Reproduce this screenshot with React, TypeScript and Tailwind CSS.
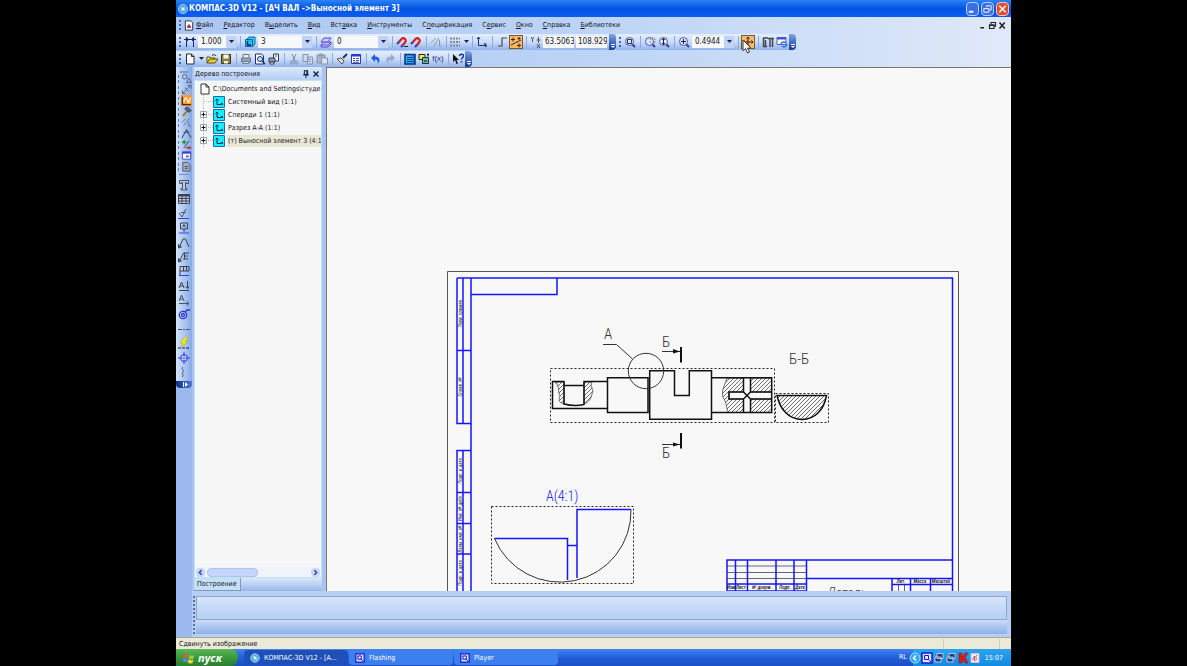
import type { ReactNode } from "react"
import clsx from "clsx"

const menu = [
  ["", "Ф", "айл"],
  ["", "Р", "едактор"],
  ["В", "ы", "делить"],
  ["", "В", "ид"],
  ["Вст", "а", "вка"],
  ["", "И", "нструменты"],
  ["С", "п", "ецификация"],
  ["С", "е", "рвис"],
  ["", "О", "кно"],
  ["", "С", "правка"],
  ["", "Б", "иблиотеки"],
]

const tree = [
  { label: "Системный вид (1:1)", expandable: false },
  { label: "Спереди 1 (1:1)", expandable: true },
  { label: "Разрез А-А (1:1)", expandable: true },
  { label: "(т) Выносной элемент 3 (4:1", expandable: true, selected: true },
]

function Icon({ children, className }: { children: ReactNode; className?: string }) {
  return (
    <svg
      viewBox="0 0 12 12"
      className={clsx("shrink-0", className ?? "h-3 w-3")}
      fill="none"
      stroke="#1f2a5a"
      aria-hidden="true"
    >
      {children}
    </svg>
  )
}

const lens = (
  <>
    <path d="M8 8l3 3" stroke="#3a3a9c" strokeWidth="2" />
    <circle cx="5.5" cy="5.5" r="4" fill="#dfe6fb" stroke="#4a55b8" />
  </>
)

const magnet = (
  <>
    <path d="M2.500 6.500L5.500 3a2.300 2.300 0 0 1 3.500 3.500L6.500 9.500" stroke="#d81e1e" strokeWidth="2.200" />
    <path d="M1 8l1.700-1.800M5 11l1.700-1.800" stroke="#2242c8" strokeWidth="2.200" />
  </>
)

const icons: Record<string, ReactNode> = {
  step: (
    <g stroke="#1e2478">
      <path d="M2.500 1v10M9.500 1v10M0 3.500h12" />
      <path d="M4 2L2.500 3.500 4 5M8 2l1.500 1.500L8 5" />
    </g>
  ),
  state: (
    <>
      <path d="M3 3l2-2h6v7l-2 2H3z" fill="#2fd0e8" stroke="#1b5fae" />
      <path d="M1.500 3.500h7v7h-7z" fill="#19c8e6" stroke="#1b5fae" />
      <path d="M3.500 5v4H7" stroke="#08215c" strokeWidth="1.300" />
    </>
  ),
  layers: (
    <g fill="#cfc8ff" stroke="#5548d0">
      <path d="M1 9l3-3h7L8 9zv2h7l3-3V6" />
      <path d="M1 6l3-4h7L8 6z" />
    </g>
  ),
  magnetOff: (
    <>
      {magnet}
      <path d="M8 10.500h4" stroke="#222" />
    </>
  ),
  magnet,
  round: (
    <g stroke="#8c94a8">
      <path d="M1 7l5-5M4 10l5-8M9.500 4v6h2" />
    </g>
  ),
  grid: <path d="M1 2.500h10M1 6h10M1 9.500h10" stroke="#85888f" strokeWidth="2" strokeDasharray="2 1" />,
  axes: (
    <g stroke="#2b3050">
      <path d="M2.500 1v8.500H10" />
      <path d="M1 3l1.500-2L4 3M9 8l2 1.500L9 11" />
      <path d="M8 7h2v2H8z" fill="#4a50d0" stroke="none" />
    </g>
  ),
  ortho: <path d="M2 10h4V2h5" stroke="#4a4d60" strokeWidth="1.200" />,
  params: (
    <g stroke="#3a2c14">
      <path d="M1 9l10-5" />
      <path d="M1 3.500h4M3 1.500v4M7 9.500h4M9 7.500v4M7.500 2.500h3M9 1v3" />
    </g>
  ),
  xy: (
    <g stroke="#4d5264">
      <path d="M1 1l1.500 2L4 1M2.500 3v3M8.500 1v6M6.500 4h4M7 8l3 4M10 8l-3 4" />
    </g>
  ),
  zoomFrame: (
    <>
      {lens}
      <path d="M3.500 3.500h4v4h-4z" stroke="#333" />
    </>
  ),
  zoomArea: (
    <>
      {lens}
      <path d="M6 2h5v5H6z" stroke="#777" strokeDasharray="1 1" />
    </>
  ),
  zoomScale: (
    <>
      {lens}
      <path d="M5.500 2.500v6M4 4l1.500-1.500L7 4M4 7l1.500 1.500L7 7" stroke="#222" />
    </>
  ),
  zoomIn: (
    <>
      {lens}
      <path d="M5.500 3v5M3 5.500h5" stroke="#222" />
    </>
  ),
  pan: (
    <g stroke="#2a1a05">
      <path d="M6 1v10M1 6h10" />
      <path d="M4.500 2.500L6 1l1.500 1.500M4.500 9.500L6 11l1.500-1.500M2.500 4.500L1 6l1.500 1.500M9.500 4.500L11 6 9.500 7.500" />
    </g>
  ),
  pages: (
    <g stroke="#44464d">
      <path d="M1 2h5M1.500 2v9M3.500 4v6M1 10.500h4" strokeWidth="1.500" />
      <path d="M6 2.500h6M8 2v9M10.500 2v9" strokeWidth="1.500" />
    </g>
  ),
  refresh: (
    <>
      <path d="M1 1.500h9v7H1z" fill="#fff" stroke="#5060c0" />
      <path d="M1 2.500h9" stroke="#4450c8" strokeWidth="2" />
      <path d="M5 8a3 3 0 0 1 5-1M11 8a3 3 0 0 1-5 2" stroke="#2a6fe8" strokeWidth="1.500" />
    </>
  ),
  fileNew: <path d="M2.500 1h5l2.500 2.500V11h-7.500zM7.500 1v2.500H10" fill="#fff" stroke="#2c2c34" />,
  open: (
    <>
      <path d="M1 10V4h3l1 1h4v2" fill="#f8e468" stroke="#5d5414" />
      <path d="M1 10l2.500-4H12L9 10z" fill="#e8cf30" stroke="#5d5414" />
      <path d="M6 2.500c2-1.500 3-1 4 .5" stroke="#222" />
    </>
  ),
  save: (
    <>
      <path d="M1.500 1.500h9v9h-9z" fill="#8d8148" stroke="#3a3416" />
      <path d="M3.500 1.500h5v4h-5zM4 8h4v2.500H4z" fill="#f5f3e6" stroke="none" />
    </>
  ),
  print: (
    <g stroke="#70788c">
      <path d="M3 5V1.500h6V5" fill="#e8ecf4" />
      <path d="M1.500 5h9v4h-9z" fill="#98a0b4" />
      <path d="M3 8.500h6v2H3z" fill="#dfe4ef" />
    </g>
  ),
  preview: (
    <>
      <path d="M1.500 1h6l2 2v8h-8z" fill="#fff" stroke="#222c6c" />
      <circle cx="6" cy="6" r="2.500" fill="#bde3f5" stroke="#20307c" />
      <path d="M8 8l3 3" stroke="#20307c" strokeWidth="1.500" />
    </>
  ),
  send: (
    <g stroke="#333a55">
      <path d="M5.500 1h5v7h-5z" fill="#fff" />
      <path d="M1 5h6v4H1z" fill="#8f98b4" />
      <path d="M2 9h4v2H2zM7 3h2" fill="#fff" />
    </g>
  ),
  cut: (
    <g stroke="#7f889e">
      <path d="M4 1l3 7M8 1L5 8" />
      <circle cx="3.800" cy="9.500" r="1.500" />
      <circle cx="8.200" cy="9.500" r="1.500" />
    </g>
  ),
  copy: (
    <g stroke="#8a93a8" fill="#cfd9ee">
      <path d="M1 1.500h5v7H1zM5.500 4h5v7h-5z" />
      <path d="M7 6.500h2M7 8.500h2" />
    </g>
  ),
  paste: (
    <g stroke="#8a93a8" fill="#aab5cc">
      <path d="M1 2h8v8H1zM3.500 1h3v2h-3z" />
      <path d="M5.500 5h6v6h-6z" fill="#dbe4f4" />
    </g>
  ),
  brush: (
    <>
      <path d="M7 5l4-4" stroke="#27306e" strokeWidth="2" />
      <path d="M1 6l4-1 3 3-2 3z" fill="#e9e4a8" stroke="#48507c" />
    </>
  ),
  props: (
    <>
      <path d="M1.500 1.500h9v9h-9z" fill="#fff" stroke="#3038b4" />
      <path d="M1.500 2.500h9" stroke="#2a36d8" strokeWidth="2" />
      <path d="M3 5.500h2M6 5.500h3M3 7.500h2M6 7.500h3M3 9.300h6" stroke="#4450a0" />
    </>
  ),
  undo: <path d="M1 5l4-4v2.500c5 0 6 4 2.500 7.500C8.500 8 7.500 6.500 5 6.500V9z" fill="#1e5ce8" stroke="none" />,
  redo: <path d="M11 5L7 1v2.500c-5 0-6 4-2.500 7.500C3.500 8 4.500 6.500 7 6.500V9z" fill="#97a8c8" stroke="none" />,
  library: (
    <>
      <path d="M1 1.500h10v9.500H1z" fill="#24b4e8" stroke="#0f2a84" strokeWidth="1.500" />
      <path d="M3 4.500h6M3 6.500h6M3 8.500h6M10 1v10" stroke="#0b3a98" />
    </>
  ),
  variables: (
    <>
      <path d="M1 1.500h6v5H1z" fill="#f6e75a" stroke="#222" />
      <path d="M4.500 4.500h6v6h-6z" fill="#6bbfa8" stroke="#20302c" />
      <path d="M6 8h3M9 1.500h2M10 .5v3" stroke="#111" />
    </>
  ),
  help: (
    <>
      <path d="M1 1v8l2-2 1.500 4L6 10.500 4.500 7H7z" fill="#111" stroke="none" />
      <path d="M7.500 3c0-2.500 4-2.500 4 0 0 1.500-2 1.500-2 3.500M9.500 8v1.500" stroke="#1c2ea8" strokeWidth="1.500" />
    </>
  ),
  geometry: (
    <g stroke="#5a6178">
      <circle cx="4" cy="4" r="2.500" />
      <path d="M6 10.500l2.500-5 3 5z" />
    </g>
  ),
  dims: <path d="M2 10l8-8M1.500 7v3.500H5M7.500 1.500H11V5M4 4l4 4" stroke="#555c72" />,
  marks: (
    <>
      <path d="M1.500 2v8.500H11" stroke="#5a2408" strokeWidth="1.500" />
      <path d="M3 8c1-6 3-6 4-2s2 2 3-3" stroke="#fff2c0" strokeWidth="1.500" />
    </>
  ),
  hammer: (
    <>
      <path d="M2 11l5-6" stroke="#b9721c" strokeWidth="2" />
      <path d="M4 3l3-2 4 4-2 2z" fill="#5a6178" stroke="#3c4256" />
    </>
  ),
  param: <path d="M1 6l4-4M3 9l6-7M8.500 5v5h2" stroke="#6a7188" />,
  measure: <path d="M1 11l5-9 5 9M3 5l6-1" stroke="#4c5268" strokeWidth="1.200" />,
  select: (
    <>
      <path d="M1 3.500h5M3.500 1v5" stroke="#1a9a28" strokeWidth="1.500" />
      <path d="M6 9.500h5" stroke="#d81e1e" strokeWidth="2" />
      <path d="M3 10l6-8" stroke="#3c4256" />
    </>
  ),
  view: (
    <>
      <path d="M1.500 2h9v8h-9z" fill="#fff" stroke="#3c48c0" />
      <path d="M1.500 3h9" stroke="#3444d8" strokeWidth="2" />
      <path d="M5.500 6h3v2h-3z" fill="#4a58c8" stroke="none" />
    </>
  ),
  spec: <path d="M2 1.500h5l3 3V11H2zM4 6h4M4 8h4" fill="#a8aebe" stroke="#4c5264" />,
  text: (
    <g stroke="#4a5064">
      <path d="M1.500 1.500h9v3h-2v-1h-1v6h1.500v1.500H3V9.500h1.500v-6h-1v1h-2z" fill="#c2cade" />
    </g>
  ),
  table: (
    <g stroke="#3e4252">
      <path d="M.5 1.500h11v9H.5z" fill="#c9cfdf" />
      <path d="M.5 2.500h11" strokeWidth="2" />
      <path d="M.5 5.500h11M.5 8h11M4 2v9M8 2v9" />
    </g>
  ),
  rough: (
    <>
      <path d="M1 5l3 4 4-8M3 4.500h4.500" stroke="#4a4f60" />
      <path d="M0 10.500h11" stroke="#3a3af0" />
    </>
  ),
  base: (
    <>
      <path d="M2.500 1h7v6h-7zM6 7v3M4.500 5.500L6 2.500l1.500 3" stroke="#3c4150" />
      <path d="M1 11h10" stroke="#3a3af0" />
    </>
  ),
  leader: <path d="M1.500 10L5 2h2.500L11 10M.5 7.500V11l3-1z" stroke="#3c4150" />,
  posLeader: <path d="M1.500 10l4-8H11M6 5h4M5 8h5M6.500 2v6M.5 7.500V11l3-1z" stroke="#3c4150" />,
  tolerance: (
    <>
      <path d="M2 10V1.500h9V6H2M5.500 2v4M8.500 2v4" stroke="#3c4150" />
      <path d="M1 10.500h10" stroke="#3a3af0" />
    </>
  ),
  cutLine: <path d="M1 8l2.500-6L6 8M2 6h3M9.500 1v7M8 6.500l1.500 2 1.500-2M1 10.500h10" stroke="#3c4150" />,
  arrowView: <path d="M1 7l2.500-6L6 7M2 5h3M1 9.500h9M8.500 7.500l2.500 2-2.500 2" stroke="#4c5264" />,
  detail: (
    <g stroke="#3434d0" strokeWidth="1.300">
      <circle cx="5" cy="7" r="3.700" />
      <circle cx="5" cy="7" r="1.500" />
      <path d="M7 4l2-2h3" />
    </g>
  ),
  axis: <path d="M0 6.500h4M5 6.500h2M8 6.500h4" stroke="#4c5264" />,
  auto: (
    <>
      <path d="M7 0L2 6h3l-2 4 7-5.500H7L10 0z" fill="#f6ee18" stroke="#a89a10" strokeWidth=".5" />
      <path d="M0 11h11" stroke="#222" strokeDasharray="3 1" />
    </>
  ),
  center: (
    <g stroke="#3c3ce0">
      <circle cx="6" cy="6" r="3.500" />
      <path d="M6 0v4M6 8v4M0 6h4M8 6h4M5 6h2" />
    </g>
  ),
  wave: <path d="M5 1c-3 2 2 3 0 5s2 3-1 5" stroke="#4c5264" />,
}

function Tool({ name, label, active }: { name: string; label: string; active?: boolean }) {
  return (
    <button
      aria-label={label}
      className={clsx(
        "flex h-[14px] w-[14px] shrink-0 items-center justify-center",
        active && "border border-[#6e5a3c] bg-[#ffb866]",
      )}
    >
      <Icon>{icons[name]}</Icon>
    </button>
  )
}

function Sep() {
  return (
    <span className="flex h-3 w-[6px] shrink-0 justify-center">
      <span className="w-px bg-[#8eabdc]" />
    </span>
  )
}

function Grip() {
  return (
    <span className="flex w-[7px] shrink-0 justify-center">
      <span className="h-[10px] border-l-2 border-dotted border-[#4667a8]" />
    </span>
  )
}

function Cap() {
  return (
    <span className="flex w-[7px] shrink-0 items-end justify-center self-stretch rounded-r-sm bg-gradient-to-b from-[#7fa5e6] to-[#123a94] pb-px">
      <svg viewBox="0 0 6 5" className="h-[5px] w-[6px]" aria-hidden="true">
        <path d="M1 0h4v1H1zM1 2h4L3 4z" fill="#fff" />
      </svg>
    </span>
  )
}

function Bar({ children }: { children: ReactNode }) {
  return (
    <div className="flex h-4 items-center rounded-r-sm bg-gradient-to-b from-[#e3eefe] via-[#c9dcf9] to-[#90b2ea]">
      {children}
    </div>
  )
}

function Combo({ value, label, className }: { value: string; label: string; className: string }) {
  return (
    <span className={clsx("mx-px grid h-3 shrink-0 items-center bg-[#f7f8fa]", className)}>
      <select
        aria-label={label}
        className="col-start-1 row-start-1 h-3 w-full appearance-none pl-[3px] text-[8px] leading-3 outline-none"
      >
        <option>{value}</option>
      </select>
      <span className="pointer-events-none col-start-1 row-start-1 flex h-3 w-[10px] items-center justify-center justify-self-end bg-[#bed3f5]">
        <Arrow />
      </span>
    </span>
  )
}

function Arrow() {
  return (
    <svg viewBox="0 0 5 3" className="h-[3px] w-[5px] shrink-0" aria-hidden="true">
      <path d="M0 0h5L2.500 3z" fill="#1b2440" />
    </svg>
  )
}

function Coord({ value, label }: { value: string; label: string }) {
  return (
    <input
      aria-label={label}
      defaultValue={value}
      className="mr-[2px] h-3 w-[31px] shrink-0 bg-[#f7f8fa] pl-[2px] text-[8px] leading-3 outline-none"
    />
  )
}

function TitleBar() {
  return (
    <header className="flex h-[17px] shrink-0 items-center bg-gradient-to-b from-[#2c83f6] via-[#0453e0] to-[#0b5cf4] px-[2px] text-white">
      <Icon className="mr-px h-[10px] w-[10px]">
        <circle cx="6" cy="6" r="5.500" fill="#4aa0e0" stroke="#b7e0ff" />
        <path d="M3 6h6M6 3v6M4 4l4 4M8 4l-4 4" stroke="#e8f8ff" />
      </Icon>
      <h1 className="flex-1 truncate font-['DejaVu_Sans_Condensed','DejaVu_Sans',sans-serif] text-[8px] leading-4 font-bold">
        КОМПАС-3D V12 - [АЧ ВАЛ -&gt;Выносной элемент 3]
      </h1>
      <div className="flex gap-[2px]">
        <button aria-label="Свернуть" className="h-[14px] w-[13px] rounded-sm border border-[#b9cdf7] bg-[#3b6fe6]">
          <Icon className="h-3 w-[11px]">
            <path d="M2 9h5" stroke="#fff" strokeWidth="2" />
          </Icon>
        </button>
        <button aria-label="Восстановить" className="h-[14px] w-[13px] rounded-sm border border-[#b9cdf7] bg-[#3b6fe6]">
          <Icon className="h-3 w-[11px]">
            <path d="M5 4V2.500h5V7H8M2 5.500h5.500v4H2z" stroke="#fff" />
          </Icon>
        </button>
        <button aria-label="Закрыть" className="h-[14px] w-[13px] rounded-sm border border-[#f3c3b4] bg-[#de5130]">
          <Icon className="h-3 w-[11px]">
            <path d="M2.500 2.500l7 7M9.500 2.500l-7 7" stroke="#fff" strokeWidth="1.500" />
          </Icon>
        </button>
      </div>
    </header>
  )
}

function MenuBar() {
  return (
    <nav className="flex h-4 items-center pr-1">
      <Grip />
      <Icon className="mr-px h-[11px] w-3">
        <path d="M2 1h6l2 2v8H2z" fill="#fff" stroke="#222c5c" />
        <path d="M4 8l2-3 2 3z" fill="#d04848" stroke="#8a2020" />
      </Icon>
      <div className="flex flex-1 gap-[10px]">
        {menu.map(([before, key, after]) => (
          <button key={before + key + after} className="leading-3">
            {before}
            <u>{key}</u>
            {after}
          </button>
        ))}
      </div>
      <div className="flex gap-px">
        <button aria-label="Свернуть документ">
          <Icon className="h-[9px] w-[9px]">
            <path d="M3 9h5" strokeWidth="2" stroke="#222" />
          </Icon>
        </button>
        <button aria-label="Восстановить документ">
          <Icon className="h-[9px] w-[9px]">
            <path d="M4 4V2h6v5H8M2 5h6v5H2zM2 6h6" strokeWidth="1.500" stroke="#222" />
          </Icon>
        </button>
        <button aria-label="Закрыть документ">
          <Icon className="h-[9px] w-[9px]">
            <path d="M2 2l7 8M9 2l-7 8" strokeWidth="2" stroke="#222" />
          </Icon>
        </button>
      </div>
    </nav>
  )
}

function Toolbars() {
  return (
    <>
      <div className="flex h-[17px] items-center">
        <Bar>
          <Grip />
          <Tool name="step" label="Текущий шаг курсора" />
          <Combo value="1.000" label="Шаг курсора" className="w-[38px]" />
          <Sep />
          <Tool name="state" label="Состояния видов" />
          <Combo value="3" label="Текущий вид" className="w-[54px]" />
          <Sep />
          <Tool name="layers" label="Состояния слоев" />
          <Combo value="0" label="Текущий слой" className="w-[54px]" />
          <Sep />
          <Tool name="magnetOff" label="Запретить привязки" />
          <Tool name="magnet" label="Привязки" />
          <Sep />
          <Tool name="round" label="Округление" />
          <Sep />
          <button aria-label="Сетка" className="flex w-5 items-center gap-[3px]">
            <Icon>{icons.grid}</Icon>
            <Arrow />
          </button>
          <Sep />
          <Tool name="axes" label="Локальная СК" />
          <Sep />
          <Tool name="ortho" label="Ортогональное черчение" />
          <Tool name="params" label="Параметрический режим" active />
          <Sep />
          <Tool name="xy" label="Координаты" />
          <Coord value="63.5063" label="Координата X" />
          <Coord value="108.929" label="Координата Y" />
          <Cap />
        </Bar>
        <Bar>
          <Grip />
          <Tool name="zoomFrame" label="Показать все" />
          <Sep />
          <Tool name="zoomArea" label="Увеличить рамкой" />
          <Tool name="zoomScale" label="Приблизить" />
          <Sep />
          <Tool name="zoomIn" label="Масштаб" />
          <Combo value="0.4944" label="Текущий масштаб" className="w-[42px]" />
          <Sep />
          <span className="relative">
            <Tool name="pan" label="Сдвинуть изображение" active />
            <svg viewBox="0 0 10 15" className="absolute top-1 left-px z-10 h-[15px] w-[10px]" aria-hidden="true">
              <path d="M1 1v11l2.500-2.500L5.500 14l2-1-2-4H9z" fill="#fff" stroke="#3c3c44" />
            </svg>
          </span>
          <Sep />
          <Tool name="pages" label="Листы" />
          <Tool name="refresh" label="Обновить" />
          <Cap />
        </Bar>
      </div>
      <div className="flex h-[17px] items-center">
        <Bar>
          <Grip />
          <button aria-label="Создать" className="flex w-[22px] items-center gap-[3px] pl-px">
            <Icon>{icons.fileNew}</Icon>
            <Arrow />
          </button>
          <Tool name="open" label="Открыть" />
          <Tool name="save" label="Сохранить" />
          <Sep />
          <Tool name="print" label="Печать" />
          <Tool name="preview" label="Предварительный просмотр" />
          <Tool name="send" label="Отправить" />
          <Sep />
          <Tool name="cut" label="Вырезать" />
          <Tool name="copy" label="Копировать" />
          <Tool name="paste" label="Вставить" />
          <Sep />
          <Tool name="brush" label="Копировать свойства" />
          <Tool name="props" label="Свойства" />
          <Sep />
          <Tool name="undo" label="Отменить" />
          <Tool name="redo" label="Повторить" />
          <Sep />
          <Tool name="library" label="Менеджер библиотек" />
          <Tool name="variables" label="Менеджер документа" />
          <button className="w-[14px] text-center font-['Liberation_Sans',sans-serif] text-[8px] leading-3 text-[#252a8c]">
            f(x)
          </button>
          <Sep />
          <Tool name="help" label="Справка" />
          <Cap />
        </Bar>
      </div>
    </>
  )
}

const compact = ["geometry", "dims", "marks", "hammer", "param", "measure", "select", "view", "spec"]
const markup = [
  "text",
  "table",
  "rough",
  "base",
  "leader",
  "posLeader",
  "tolerance",
  "cutLine",
  "arrowView",
  "detail",
  "axis",
  "auto",
  "center",
  "wave",
]

function SideTools() {
  return (
    <aside className="flex w-4 shrink-0 flex-col bg-[#9bb9ee]">
      <div className="flex flex-col rounded-b-sm bg-gradient-to-r from-[#d5e4fc] to-[#86aae6]">
        <div className="mx-1 mt-1 h-[2px] border-t-2 border-dotted border-[#6d8cc8]" />
        <div className="flex flex-col">
          {compact.map((name) => (
            <button key={name} aria-label={name} className="flex h-[11px] items-center gap-[2px] pl-[2px]">
              <span className="h-2 border-l border-dashed border-[#5f7cb6]" />
              <Icon className={clsx("h-[11px] w-[11px]", name === "marks" && "bg-[#f79a3c]")}>{icons[name]}</Icon>
            </button>
          ))}
        </div>
        <div className="mx-[3px] mt-[2px] h-px bg-[#6d8cc8]" />
        <div className="mt-1 flex h-[199px] flex-col justify-between">
          {markup.map((name) => (
            <button key={name} aria-label={name} className="flex justify-center">
              <Icon>{icons[name]}</Icon>
            </button>
          ))}
        </div>
        <div className="mt-[3px] flex h-[7px] items-center justify-end rounded-b-sm bg-gradient-to-r from-[#0b2f8c] to-[#4d7ad0] pr-1">
          <svg viewBox="0 0 5 5" className="h-[5px] w-[5px]" aria-hidden="true">
            <path d="M0 0h1v5H0zM2 0l3 2.500L2 5z" fill="#fff" />
          </svg>
        </div>
      </div>
    </aside>
  )
}

function TreePanel() {
  return (
    <section className="flex w-[134px] shrink-0 flex-col bg-[#a9c4f1] pr-1 pl-[2px]">
      <div className="flex h-[13px] shrink-0 items-center bg-gradient-to-b from-[#dce9fd] to-[#b4cdf5] pr-px pl-px">
        <h2 className="flex-1 leading-3">Дерево построения</h2>
        <button aria-label="Закрепить">
          <Icon className="h-[10px] w-[10px]">
            <path d="M4 2h4v5H4zM2.500 7h7M6 7v4M7 2v5" stroke="#10183c" strokeWidth="1.200" />
          </Icon>
        </button>
        <button aria-label="Закрыть панель">
          <Icon className="h-[10px] w-[10px]">
            <path d="M3 3l6 6M9 3l-6 6" stroke="#10183c" strokeWidth="1.500" />
          </Icon>
        </button>
      </div>
      <div className="flex min-h-0 flex-1 flex-col border border-[#bfe4f4] bg-[#f7f7f7]">
        <ul className="flex-1 overflow-hidden pt-[2px]">
          <li className="flex h-3 items-center whitespace-nowrap">
            <Icon className="mr-[2px] ml-1 h-3 w-3">
              <path d="M2 1h5l3 3v7H2zM7 1v3h3" fill="#fff" stroke="#333" />
            </Icon>
            C:\Documents and Settings\студе
          </li>
          {tree.map((item) => (
            <li key={item.label} className="flex h-[13px] items-center whitespace-nowrap">
              <svg viewBox="0 0 16 13" className="ml-[2px] h-[13px] w-4 shrink-0" aria-hidden="true">
                <path d="M6.500 0v13M7 6.500h9" stroke="#bbb" strokeDasharray="1 1" />
                {item.expandable && (
                  <>
                    <path d="M3.500 3.500h6v6h-6z" fill="#fff" stroke="#9aa6b4" />
                    <path d="M4.500 6.500h4M6.500 4.500v4" stroke="#111" />
                  </>
                )}
              </svg>
              <Icon className="mr-[2px] h-3 w-3">
                <path d="M.5.5h11v11H.5z" fill="#12f0fa" stroke="#1a6cb4" />
                <path d="M4 3v5.500h4.500M2.500 4.500L4 3l1.500 1.500M8 7.500h1.500V9" stroke="#04245c" />
              </Icon>
              <span className={clsx("flex-1 pl-px leading-3", item.selected && "bg-[#e9e7d4]")}>{item.label}</span>
            </li>
          ))}
        </ul>
        <div className="flex h-[10px] shrink-0 items-center gap-[2px] bg-[#f1f3fa] px-px">
          <button aria-label="Влево" className="h-[9px] w-[9px] rounded-sm bg-[#c6d6fb]">
            <Icon className="h-[9px] w-[9px]">
              <path d="M7.500 3l-3 3 3 3" stroke="#33487c" strokeWidth="2" />
            </Icon>
          </button>
          <span className="h-[9px] w-[51px] rounded-sm border border-[#aec3f2] bg-[#c6d6fb]" />
          <span className="flex-1" />
          <button aria-label="Вправо" className="h-[9px] w-[9px] rounded-sm bg-[#c6d6fb]">
            <Icon className="h-[9px] w-[9px]">
              <path d="M4.500 3l3 3-3 3" stroke="#33487c" strokeWidth="2" />
            </Icon>
          </button>
        </div>
      </div>
      <div className="flex h-[13px] shrink-0 bg-gradient-to-b from-[#dbe7fb] to-[#9ab8ec]">
        <button className="border-r border-b border-[#8097bd] bg-[#c3e0f6] px-[3px] leading-3">Построение</button>
      </div>
    </section>
  )
}

const stampLabels = [
  { y: 313, text: "Перв. примен." },
  { y: 387, text: "Справ. №" },
  { y: 471, text: "Подп. и дата" },
  { y: 508, text: "Инв. № дубл." },
  { y: 539, text: "Взам. инв. №" },
  { y: 573, text: "Подп. и дата" },
]

const titleLabels = [
  { x: 731, y: 589, text: "Изм" },
  { x: 741, y: 589, text: "Лист" },
  { x: 762, y: 589, text: "№ докум." },
  { x: 785, y: 589, text: "Подп." },
  { x: 800, y: 589, text: "Дата" },
  { x: 901, y: 583, text: "Лит." },
  { x: 920, y: 583, text: "Масса" },
  { x: 941, y: 583, text: "Масштаб" },
]

function Drawing() {
  return (
    <svg
      viewBox="327 68 684 523"
      preserveAspectRatio="xMinYMin slice"
      className="h-full w-full font-['Roboto_Condensed','Open_Sans_Condensed','Roboto',sans-serif]"
      fill="none"
      role="img"
      aria-label="Чертеж вала"
    >
      <defs>
        <pattern id="hatch" width="4" height="4" patternUnits="userSpaceOnUse">
          <path d="M-1 5L5-1M-1 1L1-1M3 5l2-2" stroke="#333" strokeWidth=".7" />
        </pattern>
      </defs>

      {/* sheet */}
      <path d="M447.500 600V271.500h511V600" stroke="#555" />
      <g stroke="#1414ff" strokeWidth="1.500">
        <path d="M471 600V278M457 278h495.500V600M471 294.500h86V278" />
        <path d="M457 278v145.500h14M463 278v145M457 350.500h14" />
        <path d="M457 600V450.500h14M463 450v150M457 492.500h14M457 523.500h14M457 554h14" />
      </g>
      <g fill="#111" fontSize="5" fontStyle="italic" textAnchor="middle">
        {stampLabels.map((l) => (
          <text key={l.y} transform={`translate(462 ${l.y}) rotate(-90)`}>
            {l.text}
          </text>
        ))}
      </g>

      {/* title block */}
      <path d="M727 566h79M727 572.500h79M727 578.500h79M898.500 584v8M904.500 584v8" stroke="#667" />
      <g stroke="#1414ff" strokeWidth="1.500">
        <path d="M952 560H727v31h79.500V560M735.500 560v31M747.500 560v31M776 560v31M794 560v31M727 584h79" />
        <path d="M806 578.500h146M892 578v14M910.500 578v14M930.500 578v14M892 584.500h60" />
      </g>
      <g fill="#111" fontSize="5" fontStyle="italic" fontWeight="500" textAnchor="middle">
        {titleLabels.map((l) => (
          <text key={l.text} x={l.x} y={l.y}>
            {l.text}
          </text>
        ))}
      </g>
      <g fill="#444" fontStyle="italic" fontWeight="300">
        <text x="827" y="598" fontSize="14">
          Деталь
        </text>
        <text x="914" y="596" fontSize="7">
          0.93
        </text>
        <text x="938" y="596" fontSize="7">
          1:1
        </text>
      </g>

      {/* view frames */}
      <g stroke="#222" strokeDasharray="2 2">
        <path d="M550.500 368.500h224v54h-224zM775.500 393.500h53v29h-53z" />
        <path d="M491.500 506.500h142v77h-142z" />
      </g>

      {/* shaft */}
      <g fill="url(#hatch)" stroke="#333" strokeWidth=".7">
        <path d="M555 382h9v22c-4-1-6-3-4-8-3-5 1-8-5-14z" />
        <path d="M584 382h8c-3 5 3 7 0 12-1 5-3 8-8 10z" />
        <path d="M727 378h16.500v14H729v7h14.500v13.500H728c-2-6-1-9-5-15-2-7 2-13 4-19.500z" />
        <path d="M750.500 378h21v14h-21zM750.500 399h21v13.500h-21z" />
      </g>
      <g stroke="#111" strokeWidth="1.500">
        <path d="M607.500 381.500H584v23c-6 1.500-14 1-20-.5v-22.500h-11.500v27h55M564 385.500h20" />
        <path d="M607.500 377.700H648v34.800h-40.500zM649.700 370.700h24.800v24.800h14.800v-24.800h22.200v48.600h-61.800z" />
        <path d="M711.500 377.700h60.200v34.800h-60.200M743.500 378v14H729v7h14.500v13.500M750.500 378v14h21M750.500 412.500V399h21M743.500 392l7 7M750.500 392l-7 7" />
      </g>
      <path d="M777 395.500c3 14 12 24 25 24s22-10 24.500-24z" fill="url(#hatch)" stroke="#111" strokeWidth="1.500" />

      {/* callouts */}
      <g stroke="#333">
        <circle cx="646" cy="371" r="17.700" />
        <path d="M603 344.500h13.500l16 14.500M662 351.500h18M662 444.500h18" />
      </g>
      <path d="M673 349l7 2.500-7 2zM673 442.500l7 2-7 2z" fill="#111" />
      <path d="M681 347v15.500M681 433v15.500" stroke="#111" strokeWidth="2" />
      <g fill="#333" fontSize="15" fontWeight="300">
        <text x="604" y="339">
          А
        </text>
        <text x="662" y="347">
          Б
        </text>
        <text x="662" y="458">
          Б
        </text>
        <text x="789" y="364">
          Б-Б
        </text>
      </g>

      {/* detail view */}
      <path d="M494.500 538.500A71 71 0 0 0 631 509.500" stroke="#333" />
      <path d="M494.500 538.500h73V580M577 578v-68.500h54M567.500 545.500h9.500" stroke="#1414ff" strokeWidth="1.500" />
      <text x="546" y="501" fontSize="14" fontWeight="300" fill="#2020f0">
        А(4:1)
      </text>
    </svg>
  )
}

function Task({ label, active }: { label: string; active?: boolean }) {
  return (
    <button
      className={clsx(
        "flex h-[15px] w-[104px] items-center gap-1 rounded-sm pl-[6px] leading-3",
        active ? "bg-[#1e50b8]" : "bg-[#3c80f0]",
      )}
    >
      {active ? (
        <Icon className="h-[10px] w-[10px]">
          <circle cx="6" cy="6" r="5" fill="#4aa8e0" stroke="#bfe6ff" />
          <path d="M3.500 6h5M6 3.500v5M4 4l4 4" stroke="#fff" />
        </Icon>
      ) : (
        <Icon className="h-[10px] w-[10px]">
          <path d="M1 1h10v10H1z" fill="#dfe4ff" stroke="#1818c0" strokeWidth="1.500" />
          <path d="M3.500 3.500h4v4h-4zM7 7l3 3" stroke="#1818c0" strokeWidth="1.200" />
        </Icon>
      )}
      {label}
    </button>
  )
}

function Taskbar() {
  return (
    <footer className="flex h-[17px] shrink-0 items-center bg-gradient-to-b from-[#3f85f3] via-[#245edb] to-[#1b4fc4] text-white">
      <button className="mr-[6px] flex h-full w-[62px] items-center gap-[3px] rounded-r-lg bg-gradient-to-b from-[#5cb85a] via-[#3a9a3c] to-[#2c7c30] pl-[7px]">
        <Icon>
          <path d="M1 3c2-1.500 3-1 4.500 0L4.500 6C3 5 2 5 0 6z" fill="#f0562c" stroke="none" />
          <path d="M6.500 3c2 1 3 1 5 0l-1 3.500c-2 1-3 .5-5 0z" fill="#8cd042" stroke="none" />
          <path d="M0 7c2-1 3-1 4.500 0l-1 3.500C2 9.500 1 9.500-1 10.500z" fill="#4a8cf4" stroke="none" />
          <path d="M5.500 7.500c2 .5 3 .5 5 0l-1 3.500c-2 1-3 .5-5-.5z" fill="#f8d030" stroke="none" />
        </Icon>
        <span className="font-['Open_Sans',sans-serif] text-[11px] leading-4 font-bold italic">пуск</span>
      </button>
      <div className="flex flex-1 gap-px">
        <Task label="КОМПАС-3D V12 - [А..." active />
        <Task label="Flashing" />
        <Task label="Player" />
      </div>
      <span className="mr-[6px]">RL</span>
      <div className="flex h-full items-center bg-gradient-to-b from-[#2ba4f0] to-[#128be0] pr-2">
        <button aria-label="Показать значки" className="-ml-1">
          <Icon>
            <circle cx="6" cy="6" r="5" fill="#35a8f4" stroke="#a8dcff" />
            <path d="M7 3.500L4.500 6 7 8.500" stroke="#fff" strokeWidth="1.500" />
          </Icon>
        </button>
        <Icon>
          <path d="M1 1h10v10H1z" fill="#dfe4ff" stroke="#1818d0" strokeWidth="1.500" />
          <path d="M3.500 3.500h4v4h-4zM7 7l3 3" stroke="#1818d0" />
        </Icon>
        {["left", "right"].map((side) => (
          <Icon key={side}>
            <path d="M4 1.500h6v5H4zM2 5h6v5H2z" fill="#2a3c78" stroke="#b8c8ec" />
          </Icon>
        ))}
        <Icon>
          <path d="M2 1h3v4l3-4h3L8 5.500 11 11H8L5 7v4H2z" fill="#e81818" stroke="#7c1414" strokeWidth=".5" />
        </Icon>
        <Icon>
          <path d="M2 1.500h8v9H2z" fill="#f4ecf4" stroke="#d8b8d0" />
          <path d="M3.500 8l2-4v5M8 3.500c-3 0 1 4-1.500 5" stroke="#a85878" />
        </Icon>
        <time className="ml-1 leading-4">15:07</time>
      </div>
    </footer>
  )
}

export default function App() {
  return (
    <div className="h-screen bg-black px-44">
      <div className="flex h-full flex-col overflow-hidden bg-[#a9c4f1] font-['DejaVu_Sans_Condensed','DejaVu_Sans',sans-serif] text-[7px] text-[#15151c]">
        <TitleBar />
        <div className="shrink-0 bg-gradient-to-r from-[#abc6f2] via-[#bcd4f6] to-[#e0e9f9]">
          <MenuBar />
          <Toolbars />
        </div>
        <div className="flex min-h-0 flex-1">
          <SideTools />
          <div className="flex min-w-0 flex-1 flex-col">
            <div className="flex min-h-0 flex-1">
              <TreePanel />
              <main className="min-w-0 flex-1 overflow-hidden border-t border-l border-[#77776c] bg-[#f8f8f8]">
                <Drawing />
              </main>
            </div>
            <div className="flex h-[46px] shrink-0 bg-[#b9cef3] pt-[5px] pr-1 pb-[3px] pl-px">
              <span className="mr-px border-l-2 border-dotted border-[#56719f]" />
              <div className="flex flex-1 flex-col">
                <div className="flex-[3] border border-[#8ea6cf] bg-gradient-to-b from-[#d6e4fb] to-[#b5d0f4]" />
                <div className="flex-[2] bg-gradient-to-b from-[#cbdcf8] to-[#8fb0e8]" />
              </div>
            </div>
          </div>
        </div>
        <div className="flex h-3 shrink-0 items-center border-t border-[#a8a898] bg-[#ece9d8] pl-[3px]">
          <span className="flex-1 leading-3">Сдвинуть изображение</span>
          <span className="h-[10px] w-14 border-l border-[#d2cfbc]" />
          <span className="h-[10px] w-3 border-l border-[#d2cfbc]" />
        </div>
        <Taskbar />
      </div>
    </div>
  )
}
